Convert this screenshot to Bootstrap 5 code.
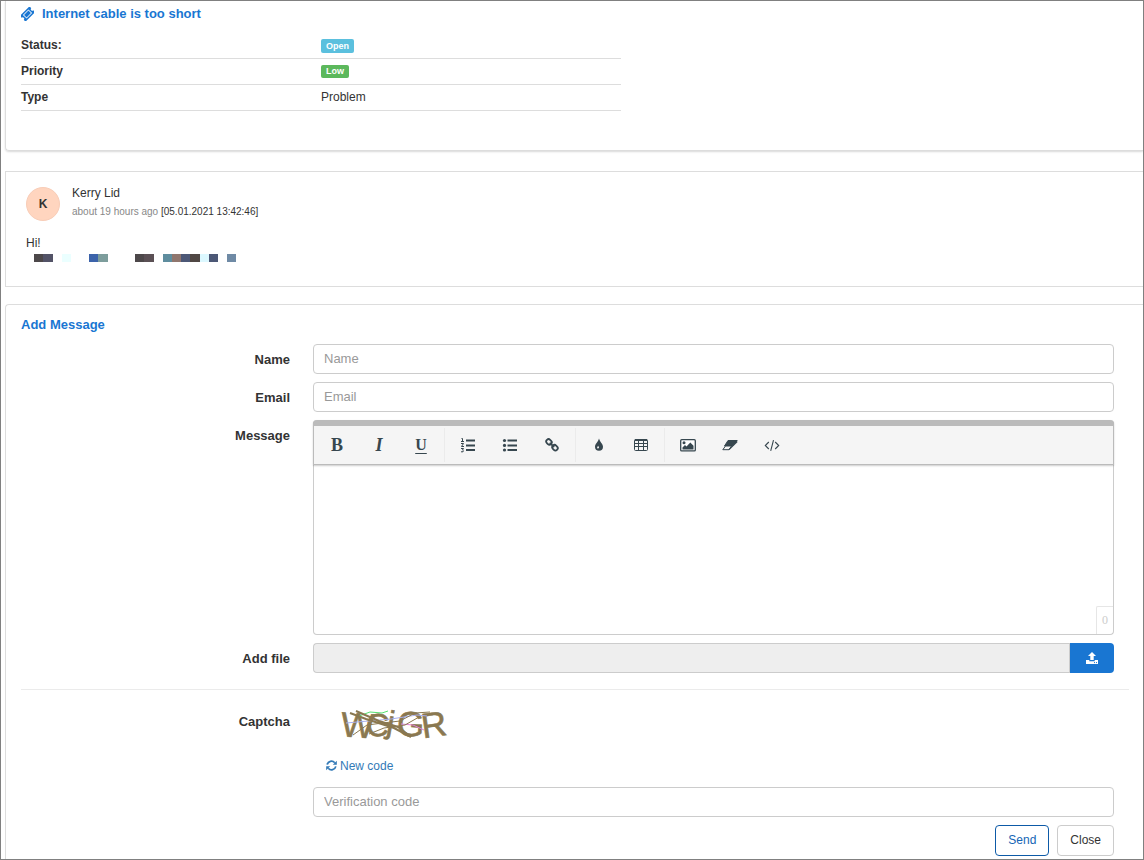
<!DOCTYPE html>
<html lang="en">
<head>
<meta charset="utf-8">
<meta name="viewport" content="width=device-width, initial-scale=1">
<title>Internet cable is too short</title>
<link href="https://cdn.jsdelivr.net/npm/bootstrap@5.3.0/dist/css/bootstrap.min.css" rel="stylesheet">
<style>
body { font-family: "Liberation Sans", Arial, sans-serif; font-size: 12px; line-height: 18px; color: #333; background: #fff; }
svg { display: block; }
.frame { min-height: 100vh; border: 1px solid #808080; overflow: hidden; padding-left: 4px; }
.panel { border: 1px solid #ddd; border-right: 0; padding: 0 15px; }
.ticket-panel { border-top: 0; border-bottom-left-radius: 4px; padding-bottom: 39px; box-shadow: 0 1px 2px rgba(0,0,0,.15); }
.heading { font-size: 13px; font-weight: 700; line-height: 18px; color: #1976d2; margin: 0; }
.ticket-panel .heading { padding-top: 4px; }
.info { width: 600px; max-width: 100%; margin: 9px 0 0; color: #333; }
.info th, .info td { width: 50%; height: 26px; padding: 0; line-height: 18px; border-bottom: 1px solid #ddd; vertical-align: middle; }
.tag { font-size: 9px; line-height: 14px; padding: 0 5px; border-radius: 2px; vertical-align: middle; }
.tag-open { background: #5bc0de; }
.tag-low { background: #5cb85c; line-height: 13px; }
.post { margin-top: 20px; padding: 12px 20px 24px; }
.avatar { width: 34px; height: 34px; border-radius: 50%; background: #ffd5bf; border: 1px solid #f8cdb8; font-weight: 700; margin-top: 3px; }
.stamp { font-size: 10px; line-height: 20px; color: #333; }
.stamp span { color: #888; }
.mosaic { margin: 2px 0 0 8px; }
.form-panel { margin-top: 17px; border-bottom: 0; border-radius: 4px 0 0 0; padding: 11px 14px 0 15px; }
.form-panel .heading { margin-bottom: 10px; }
.form-panel .row { --bs-gutter-x: 30px; margin: 0 0 8px; }
.field-label { font-size: 13px; font-weight: 700; line-height: 18px; padding: 7px 8px 0 0; text-align: right; }
.captcha-label { padding-top: 11px; }
.field { height: 30px; font-size: 13px; line-height: 18px; padding: 5px 10px; border: 1px solid #ccc; border-radius: 4px; color: #555; }
.field::placeholder { color: #999; }
.editor { border: 1px solid #ccc; border-top: 0; border-radius: 4px; height: 215px; }
.tools { margin: 0 -1px; border: 1px solid #bbb; border-top: 6px solid #bbb; border-radius: 4px 4px 0 0; background: #f5f5f5; height: 45px; padding: 0 2px; box-shadow: 0 1px 2px rgba(0,0,0,.2); }
.tool { width: 38px; height: 38px; margin: 0 2px; padding: 0; border: 0; background: none; color: #37474f; font: 700 18px/38px "Liberation Serif", serif; }
.tool svg { margin: auto; }
.tool-underline { font-size: 16px; font-weight: 700; line-height: 36px; text-decoration: underline; text-decoration-thickness: 1px; text-underline-offset: 3px; }
.divider { width: 1px; height: 34px; margin: 2px 2px 0; background: #ebebeb; }
.writing { resize: none; border: 0; outline: 0; background: transparent; padding: 10px; min-height: 0; }
.counter { right: 0; bottom: 0; width: 17px; height: 28px; border: 1px solid #e6e6e6; border-width: 1px 0 0 1px; color: #ccc; font: 12px/27px "Liberation Serif", serif; text-align: center; border-radius: 2px 0 0 0; }
.file-name[readonly] { background: #eee; border-right: 0; }
.upload { width: 45px; height: 30px; padding: 0; background: #1976d2; border: 0; border-left: 1px solid #ccc; border-radius: 0 4px 4px 0; color: #fff; }
.rule { margin: 16px 0 12px; border-color: #ddd; opacity: .6; }
.captcha-art { overflow: visible; font-family: "Liberation Sans Narrow", "Liberation Sans", sans-serif; font-size: 35px; fill: #8a7850; stroke: #8a7850; }
.new-code { color: #337ab7; text-decoration: none; padding-left: 13px; gap: 3px; margin: 11px 0 12px; }
.actions { padding-right: 15px; }
.action { height: 31px; padding: 0 12px; font-size: 12px; line-height: 27px; border-radius: 4px; background: #fff; border-color: #ccc; color: #333; }
.action-send { border-color: #0d5aa7; color: #1565b5; }
</style>
</head>
<body>
<div class="frame d-flex flex-column">
  <section class="panel ticket-panel">
    <h1 class="heading d-flex align-items-center">
      <svg width="13" height="14" viewBox="0 0 13 14" class="me-2 flex-shrink-0" aria-hidden="true"><g transform="rotate(-45 6.500 7)"><path fill="#1976d2" fill-rule="evenodd" d="M-.3 3h13.600v2.500a1.500 1.500 0 0 0 0 3V11H-.3V8.500a1.500 1.500 0 0 0 0-3zM2.600 4.400v5.200h7.800V4.400z"/><path fill="#1976d2" d="M3.400 5.200h6.200v3.600H3.400z"/></g></svg>
      Internet cable is too short
    </h1>
    <table class="info">
      <tr><th scope="row">Status:</th><td><span class="badge tag tag-open">Open</span></td></tr>
      <tr><th scope="row">Priority</th><td><span class="badge tag tag-low">Low</span></td></tr>
      <tr><th scope="row">Type</th><td>Problem</td></tr>
    </table>
  </section>

  <article class="panel post">
    <div class="d-flex">
      <div class="avatar d-flex align-items-center justify-content-center">K</div>
      <div class="ps-2 ms-1">
        <div>Kerry Lid</div>
        <div class="stamp"><span>about 19 hours ago</span> [05.01.2021 13:42:46]</div>
      </div>
    </div>
    <div class="mt-2 pt-1">Hi!</div>
    <svg class="mosaic" width="204" height="8" aria-hidden="true" shape-rendering="crispEdges">
      <path fill="#4d484a" d="M0 0h9v8H0zM101 0h9v8h-9z"/><path fill="#535367" d="M9 0h10v8H9z"/><path fill="#ebffff" d="M28 0h9v8h-9z"/>
      <path fill="#3c63aa" d="M55 0h9v8h-9z"/><path fill="#7d9d9c" d="M64 0h10v8H64z"/><path fill="#5b5055" d="M110 0h10v8h-10z"/>
      <path fill="#5f8d9e" d="M129 0h9v8h-9z"/><path fill="#90766e" d="M138 0h9v8h-9z"/><path fill="#4c5876" d="M147 0h9v8h-9zM175 0h9v8h-9z"/>
      <path fill="#504744" d="M156 0h10v8h-10z"/><path fill="#dcf8ff" d="M166 0h9v8h-9z"/><path fill="#6f8aa5" d="M193 0h9v8h-9z"/>
    </svg>
  </article>

  <section class="panel form-panel flex-grow-1">
    <form>
      <h2 class="heading">Add Message</h2>
      <div class="row">
        <label class="col-3 field-label" for="name">Name</label>
        <div class="col-9"><input class="form-control field" id="name" type="text" placeholder="Name"></div>
      </div>
      <div class="row">
        <label class="col-3 field-label" for="email">Email</label>
        <div class="col-9"><input class="form-control field" id="email" type="email" placeholder="Email"></div>
      </div>
      <div class="row">
        <label class="col-3 field-label" for="message">Message</label>
        <div class="col-9">
          <div class="editor d-flex flex-column position-relative">
            <div class="tools d-flex" role="toolbar" aria-label="Formatting">
              <button type="button" class="tool">B</button>
              <button type="button" class="tool fst-italic">I</button>
              <button type="button" class="tool tool-underline">U</button>
              <span class="divider"></span>
              <button type="button" class="tool" aria-label="Ordered list"><svg width="16" height="16" viewBox="0 0 16 16"><path fill="#37474f" d="M6 2.500h9v2H6zM6 7.500h9v2H6zM6 12h9v2H6z"/><path fill="none" stroke="#37474f" d="M1.500 1.500h1v3M1 4.500h3M1 6.500h2.500L1.500 9.500H4M1 11.500h2.500l-1 1.500q1.500.5.5 1.800H1"/></svg></button>
              <button type="button" class="tool" aria-label="Bulleted list"><svg width="16" height="16" viewBox="0 0 16 16" fill="#37474f"><path d="M5.500 2.500H15v2H5.500zM5.500 7.500H15v2H5.500zM5.500 12H15v2H5.500z"/><circle cx="2.500" cy="3.500" r="1.600"/><circle cx="2.500" cy="8.400" r="1.600"/><circle cx="2.500" cy="13" r="1.600"/></svg></button>
              <button type="button" class="tool" aria-label="Link"><svg width="16" height="16" viewBox="0 0 16 16" fill="none" stroke="#37474f" stroke-width="1.800" stroke-linecap="round"><rect x="2.100" y="2.600" width="5.800" height="4.600" rx="2.200" transform="rotate(45 5 4.900)"/><rect x="8.100" y="8.400" width="5.800" height="4.600" rx="2.200" transform="rotate(45 11 10.700)"/><path d="M6.300 6.300l3.400 3.200"/></svg></button>
              <span class="divider"></span>
              <button type="button" class="tool" aria-label="Colors"><svg width="16" height="16" viewBox="0 0 16 16"><path fill="#37474f" d="M8 1.500C9 5 12 7 12 9.800a4 4 0 0 1-8 0C4 7 7 5 8 1.500z"/><path fill="#f5f5f5" d="M7.200 8.700q1.800 2.700-.4 2.800-1.600-.5.4-2.800"/></svg></button>
              <button type="button" class="tool" aria-label="Insert table"><svg width="16" height="16" viewBox="0 0 16 16" fill="none" stroke="#37474f"><rect x="1.500" y="2.500" width="13" height="11" rx="1"/><path stroke-width="2" d="M2 3h12"/><path d="M1.500 6.500h13M1.500 9.500h13M5.500 3v10.500M10.500 3v10.500"/></svg></button>
              <span class="divider"></span>
              <button type="button" class="tool" aria-label="Insert image"><svg width="16" height="16" viewBox="0 0 16 16"><rect x=".7" y="2.700" width="14.600" height="11.200" rx="1" fill="#fff" stroke="#37474f" stroke-width="1.300"/><circle cx="4" cy="5.700" r="1.500" fill="#37474f"/><path fill="#37474f" d="M2.500 12.500v-2L5 8l1.500 1.500L10.300 5.500l3.200 3.300v3.700z"/></svg></button>
              <button type="button" class="tool" aria-label="Clear formatting"><svg width="16" height="16" viewBox="0 0 16 16"><path fill="#37474f" stroke="#37474f" stroke-linejoin="round" d="M6 3.500h9.200L10.500 9H2.500z"/><path fill="#f5f5f5" stroke="#37474f" stroke-linejoin="round" d="M3.500 9H9.500L7 12.700H.8z"/><path stroke="#37474f" stroke-width="1.200" d="M7 12.700L15.200 4.500"/></svg></button>
              <button type="button" class="tool" aria-label="Code view"><svg width="16" height="16" viewBox="0 0 16 16" fill="none" stroke="#37474f" stroke-width="1.100"><path d="M4.800 5L1.300 8.500l3.500 3.500M11.200 5l3.500 3.500-3.500 3.500M9.500 3.200L6.700 13.800"/></svg></button>
            </div>
            <textarea class="writing flex-grow-1 w-100" id="message"></textarea>
            <span class="counter position-absolute">0</span>
          </div>
        </div>
      </div>
      <div class="row">
        <label class="col-3 field-label" for="file">Add file</label>
        <div class="col-9"><div class="input-group">
          <input class="form-control field file-name" id="file" type="text" readonly>
          <button type="button" class="btn upload" aria-label="Upload"><svg class="mx-auto" width="14" height="14" viewBox="0 0 14 14"><path fill="#fff" d="M7 1l4 4H8.700v4H5.300V5H3zM1 9h3.300v1.300h5.400V9H13v4H1z"/><path stroke="#1976d2" d="M9 11.600h1M11 11.600h1"/></svg></button>
        </div></div>
      </div>
      <hr class="rule">
      <div class="row">
        <label class="col-3 field-label captcha-label" for="code">Captcha</label>
        <div class="col-9">
          <svg class="captcha-art" width="150" height="44" viewBox="0 0 150 44" role="img" aria-label="Captcha">
            <g stroke-width=".6">
              <text x="28" y="35" transform="rotate(4 40 24)">W</text><text x="53" y="34" font-size="32" transform="rotate(4 64 22)">C</text><text x="74" y="31" font-size="32" transform="rotate(10 76 22)">j</text><text x="84" y="34" transform="rotate(3 95 22)">G</text><text x="108" y="35" transform="rotate(-8 118 22)">R</text>
            </g>
            <g fill="none"><path stroke="#55df70" d="M46 14l11-4 12 1 6-2"/><path stroke="#aab0ed" d="M33 21l45-4 26-4 10 1"/><path stroke="#e080da" d="M88 22l12 1 11 5"/>
            <path stroke-width="2" d="M37 11l16 6 28 9 17 9M43 9l23 10 19 6 13 10"/><path d="M40 33l14-10 16-2 17-2 15-8 15-1M56 32l15-6 21-3 14-8"/></g>
          </svg>
          <a href="#" class="new-code d-flex align-items-center"><svg width="11" height="11" viewBox="0 0 12 12" fill="none" stroke="#337ab7" stroke-width="1.900" aria-hidden="true"><path d="M1.300 5A4.700 4.700 0 0 1 9.500 3M10.700 7A4.700 4.700 0 0 1 2.500 9"/><path fill="#337ab7" stroke="none" d="M11.800.8v4.400H7.400zM.2 11.200V6.800h4.400z"/></svg>New code</a>
          <input class="form-control field" id="code" type="text" placeholder="Verification code">
        </div>
      </div>
      <div class="actions d-flex justify-content-end gap-2">
        <button type="button" class="btn action action-send">Send</button>
        <button type="button" class="btn action">Close</button>
      </div>
    </form>
  </section>
</div>
<script src="https://cdn.jsdelivr.net/npm/bootstrap@5.3.0/dist/js/bootstrap.bundle.min.js"></script>
</body>
</html>
